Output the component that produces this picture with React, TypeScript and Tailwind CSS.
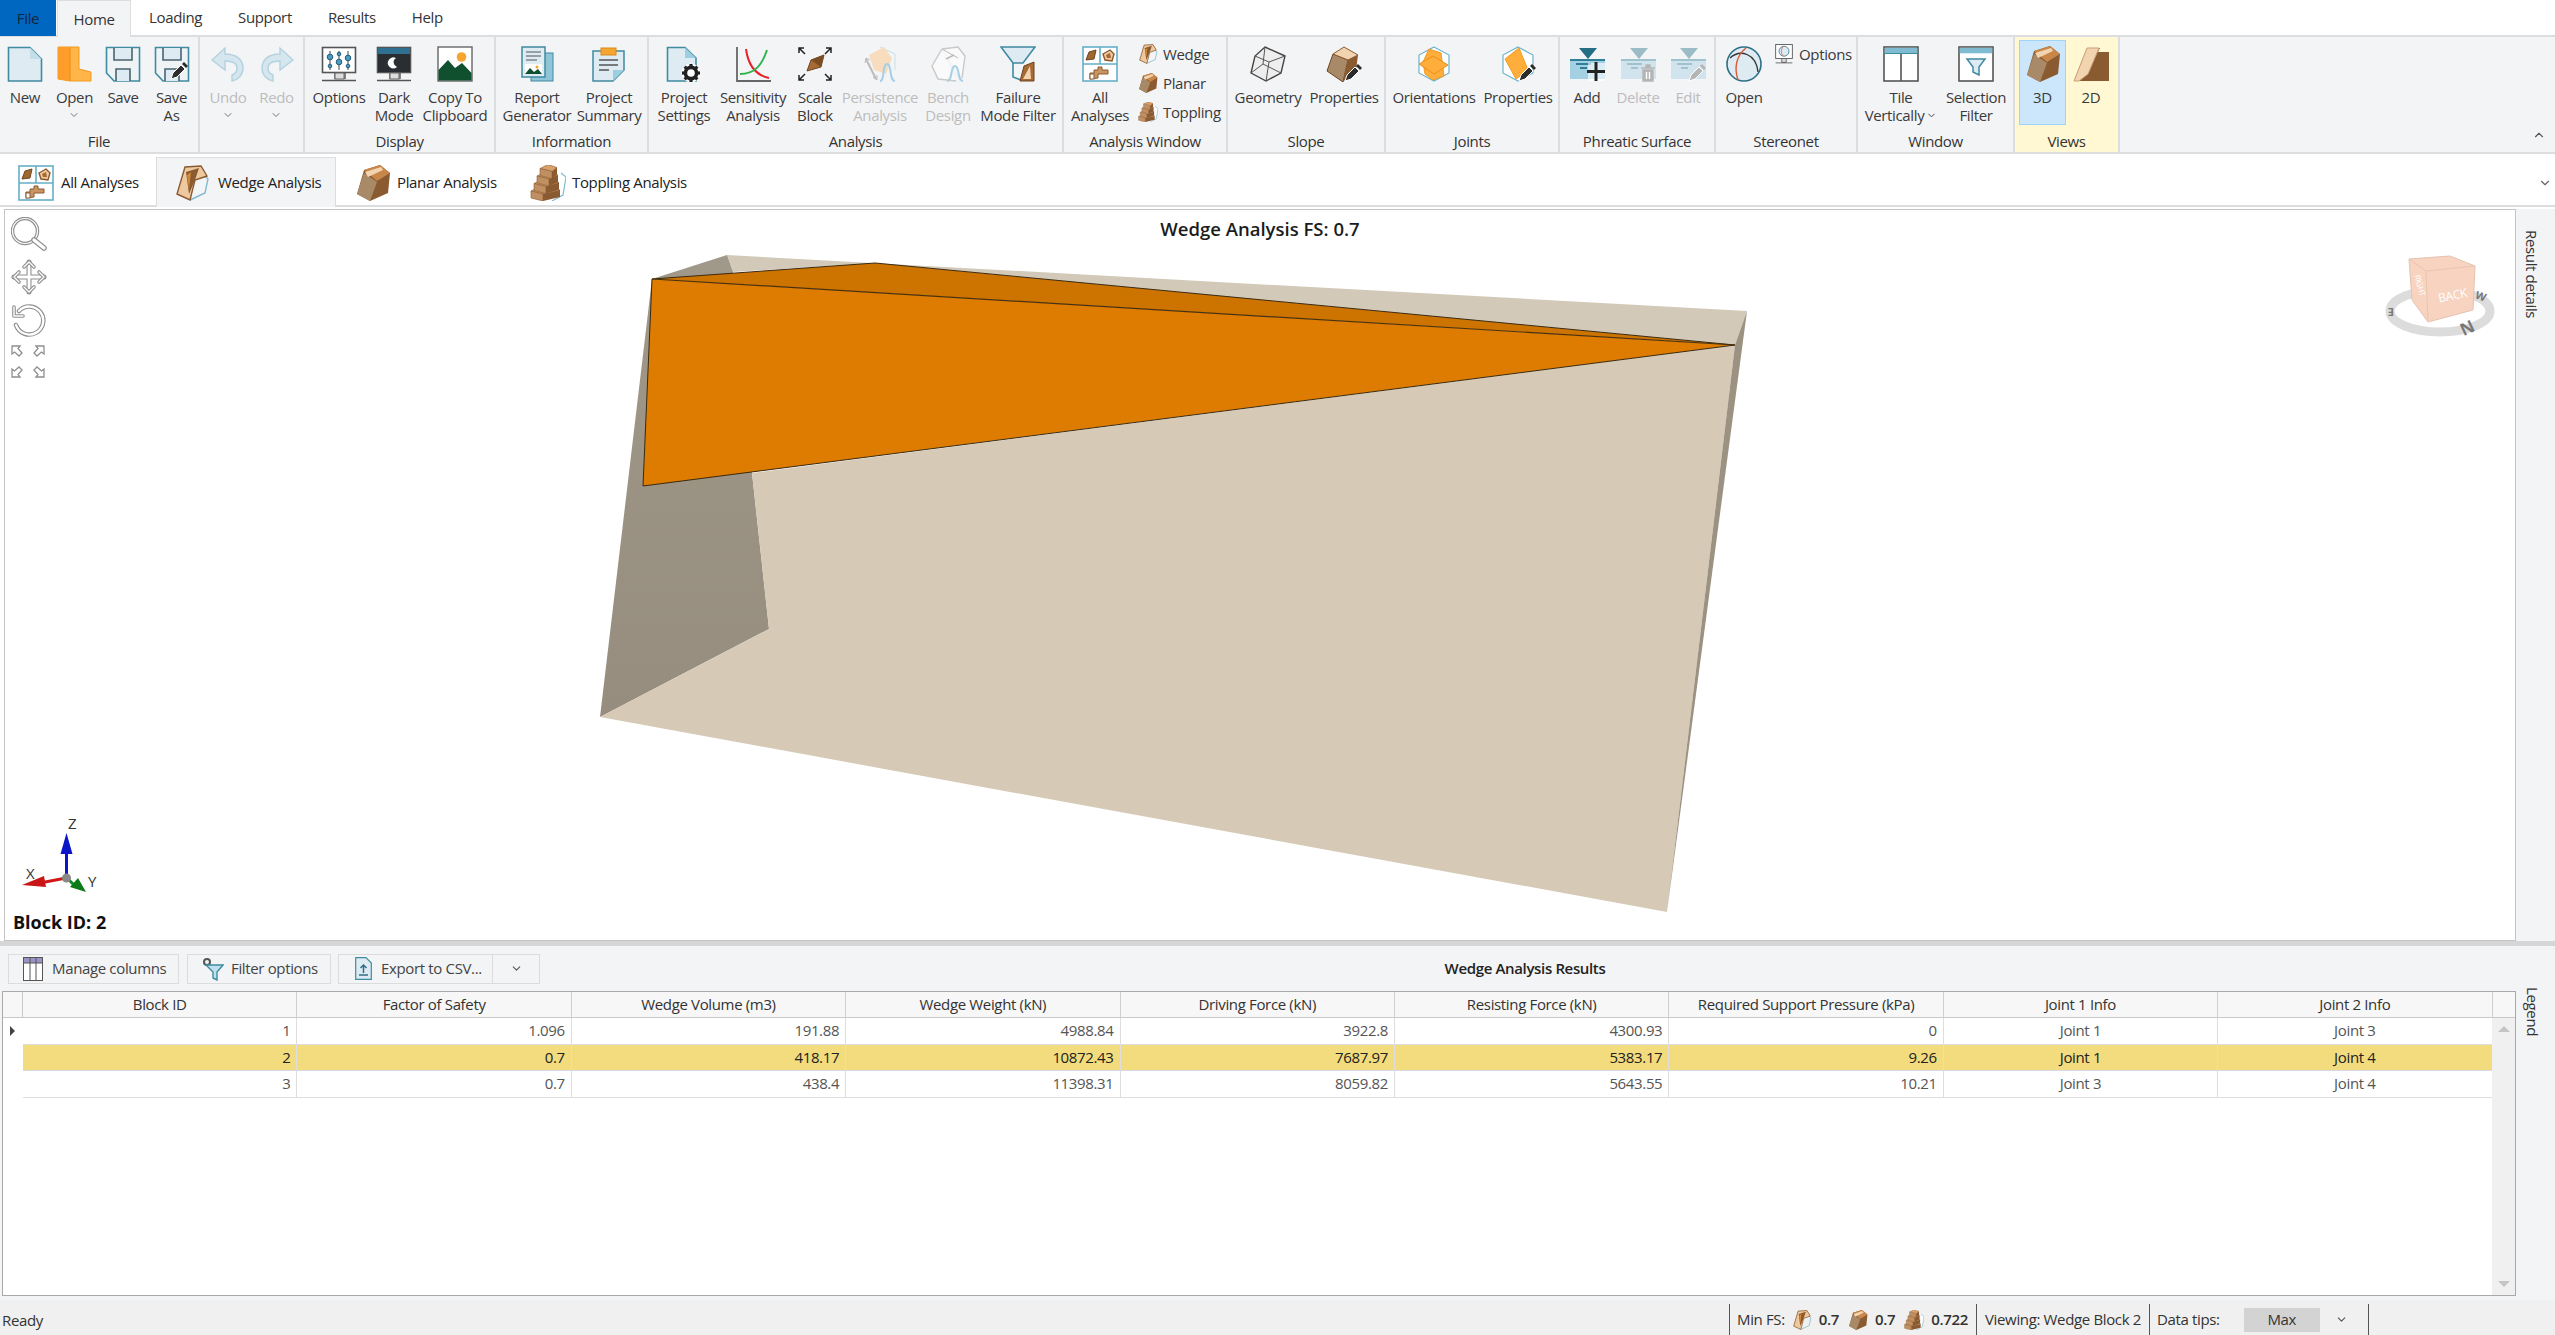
import type { ReactNode } from 'react'
import { ChevronDown, ChevronUp } from 'lucide-react'

// ribbon icon shell, everything is drawn on a 36 unit square
function Ico({ size = 36, children }: { size?: number; children: ReactNode }) {
  return (
    <svg width={size} height={size} viewBox="0 0 36 36" className="shrink-0 block">
      {children}
    </svg>
  )
}

const TEAL = '#3f8ba0'
const PALE = '#deebf3'
const BR = '#8a5a30'

const Pencil = ({ x = 0, y = 0, c = '#2c2c2c' }: { x?: number; y?: number; c?: string }) => (
  <g transform={`translate(${x} ${y})`}>
    <path d="M1 16 L3 10 L11 2 L15 6 L7 14 Z" fill={c} stroke="#fff" strokeWidth="1" />
    <path d="M12 1 L14 -1 L18 3 L16 5 Z" fill={c} />
  </g>
)

const Page = () => (
  <Ico>
    <path d="M1.5 1.5H23L34.5 13V35H1.5Z" fill={PALE} stroke={TEAL} strokeWidth="1.6" />
    <path d="M23 1.5V13H34.5Z" fill="#c3dde9" />
  </Ico>
)
const Folder = () => (
  <Ico>
    <path d="M1 1H22V23L34 26V35H13L1 33Z" fill="#ffb547" stroke="#f09a22" />
    <path d="M1 1H13V35L1 33Z" fill="#ff9d2a" />
    <path d="M13 2L13 35" stroke="#e88c14" />
  </Ico>
)
const Floppy = ({ pencil }: { pencil?: boolean }) => (
  <Ico>
    <path d="M1.5 1.5H34.5V35H9L1.5 27Z" fill="#eef3f6" stroke={TEAL} strokeWidth="1.6" />
    <path d="M9 2V14H27V2" fill={PALE} stroke="#4a6470" strokeWidth="1.6" />
    <path d="M11 35V23H25V35" fill={PALE} stroke="#4a6470" strokeWidth="1.6" />
    {pencil && <Pencil x={16} y={17} />}
  </Ico>
)
const Curl = ({ flip }: { flip?: boolean }) => (
  <Ico>
    <g transform={flip ? 'translate(36 0) scale(-1 1)' : undefined} fill="#d5e6ee" stroke="#b4d2df" strokeWidth="1.4">
      <path d="M2 14 L15 2 V8 C28 8 33 15 33 22 C33 29 28 34 22 35 V29 C25 28 27 25 27 22 C27 18 23 15 15 15 V24 Z" />
    </g>
  </Ico>
)
const Monitor = ({ children }: { children: ReactNode }) => (
  <Ico>
    <rect x="1.5" y="1.5" width="33" height="25" fill="#fff" stroke="#555" strokeWidth="1.6" />
    <path d="M14 27V33M24 27V33" stroke="#555" strokeWidth="1.4" fill="#ddd" />
    <rect x="14" y="27" width="9" height="6" fill="#ddd" stroke="#666" />
    <path d="M1 34.5H35" stroke="#555" strokeWidth="1.4" />
    {children}
  </Ico>
)
const Sliders = () => (
  <Monitor>
    {[9, 18, 27].map((x, i) => (
      <g key={x}>
        <path d={`M${x} 5V24`} stroke="#444" />
        <circle cx={x} cy={[11, 16, 12][i]} r="2.8" fill="#4c9cc0" stroke="#215a78" />
        <circle cx={x} cy={[20, 8, 20][i]} r="1.8" fill="#4c9cc0" stroke="#215a78" />
      </g>
    ))}
  </Monitor>
)
const DarkMode = () => (
  <Monitor>
    <rect x="2" y="2" width="32" height="24" fill="#2a2d31" />
    <rect x="2" y="2" width="32" height="6" fill="#2f6f8f" />
    <path d="M20 12 A5.5 5.5 0 1 0 21 21 A5 5 0 0 1 20 12Z" fill="#fff" />
  </Monitor>
)
const Picture = () => (
  <Ico>
    <rect x="1" y="1" width="34" height="34" fill="#fff" stroke="#666" strokeWidth="1.4" />
    <circle cx="24.5" cy="11" r="4.8" fill="#f5a630" />
    <path d="M1.5 34.5V24L11 14L18 22L25 17L34.5 27V34.5Z" fill="#10502f" />
  </Ico>
)
const Report = () => (
  <Ico>
    <rect x="12" y="7" width="22" height="28" fill="#8fc4d9" stroke={TEAL} />
    <rect x="3" y="1" width="23" height="30" fill={PALE} stroke={TEAL} strokeWidth="1.5" />
    <path d="M7 6H22M7 10H22M7 14H18" stroke="#555" strokeWidth="1.2" />
    <rect x="6" y="18" width="17" height="10" fill="#fff" />
    <path d="M6 28L11 22L15 26L19 23L23 28Z" fill="#10502f" />
    <circle cx="18" cy="21" r="1.5" fill="#f5a630" />
  </Ico>
)
const Summary = () => (
  <Ico>
    <path d="M2 5H33V24L22 35H2Z" fill={PALE} stroke={TEAL} strokeWidth="1.5" />
    <rect x="10" y="2" width="15" height="7" fill="#f5a630" stroke="#d98a18" />
    <path d="M8 14H27M8 19H27M8 24H18" stroke="#555" strokeWidth="1.3" />
    <path d="M33 24L22 35V24Z" fill="#9ccde0" />
  </Ico>
)
const Gear = ({ x, y }: { x: number; y: number }) => (
  <g transform={`translate(${x} ${y})`}>
    <circle r="9.5" fill="#fff" />
    <circle r="5.6" fill="none" stroke="#222" strokeWidth="3.6" />
    {[0, 45, 90, 135, 180, 225, 270, 315].map((a) => (
      <rect key={a} x="-1.6" y="-9" width="3.2" height="4" fill="#222" transform={`rotate(${a})`} />
    ))}
  </g>
)
const SettingsPage = () => (
  <Ico>
    <path d="M1.5 1.5H19L30 12V35H1.5Z" fill={PALE} stroke={TEAL} strokeWidth="1.6" />
    <path d="M19 1.5V12H30Z" fill="#9ccde0" />
    <Gear x={25} y={27} />
  </Ico>
)
const Sensitivity = () => (
  <Ico>
    <path d="M2 1V35H36" fill="none" stroke="#666" strokeWidth="1.8" />
    <path d="M11 3C13 18 20 29 34 32" fill="none" stroke="#e8232a" strokeWidth="2" />
    <path d="M5 28C20 28 27 19 32 4" fill="none" stroke="#2fb34a" strokeWidth="2" />
  </Ico>
)
const Scale = () => (
  <Ico>
    <path d="M10 25L14 14L27 9L24 21Z" fill="#a66a35" stroke="#6e4520" />
    <path d="M14 14L27 9L24 21Z" fill="#7c4c22" />
    <g stroke="#222" strokeWidth="1.5" fill="none">
      <path d="M2 2L8 8M2 7V2H7M34 2L28 8M29 2H34V7M2 34L8 28M2 29V34H7M34 34L28 28M34 29V34H29" />
    </g>
  </Ico>
)
const Persistence = () => (
  <Ico>
    <path d="M18 1L33 8V24" fill="none" stroke="#c8dfe8" />
    <path d="M7 9L22 1L30 12L24 28L12 24Z" fill="#f7ddbd" />
    <path d="M4 13L14 33" stroke="#bbb" strokeWidth="2" />
    <path d="M3 17L4 12L8 14M11 31L15 34L15 29" stroke="#bbb" fill="none" />
    <path d="M18 35C23 35 20 18 25 18C30 18 27 35 33 35" fill="none" stroke="#a9cfe6" strokeWidth="2" />
  </Ico>
)
const Bench = () => (
  <Ico>
    <path d="M12 3L28 1L35 10L32 32M12 3L2 20L8 33L26 35M28 12L12 3" fill="#fafafa" stroke="#c9c9c9" strokeWidth="1.4" />
    <path d="M16 13L24 9" stroke="#bbb" strokeWidth="1.4" />
    <path d="M17 35C23 35 20 20 25 20C30 20 27 35 33 35" fill="none" stroke="#a9cfe6" strokeWidth="2" />
  </Ico>
)
const Funnel = () => (
  <Ico>
    <path d="M1 1H35L23 17H13Z" fill={PALE} stroke={TEAL} strokeWidth="1.6" />
    <path d="M13 17V31L21 34" fill="none" stroke={TEAL} strokeWidth="1.6" />
    <path d="M20 35L24 20L34 16V35Z" fill="#a66a35" stroke="#6e4520" />
    <path d="M23 33L30 20L31 33Z" fill="#f3d4b0" />
  </Ico>
)
const AllGrid = () => (
  <Ico>
    <rect x="1" y="1" width="34" height="34" fill="#fff" stroke="#66aec9" strokeWidth="1.6" />
    <path d="M18 1V18M1 18H35" stroke="#66aec9" strokeWidth="1.6" />
    <path d="M4 14L7 6L14 4L12 13Z" fill="#a0682f" stroke="#6e4520" />
    <path d="M21 8L28 4L32 8L30 15L23 14Z" fill="#f1c79b" stroke={BR} strokeWidth="1.4" />
    <path d="M24 9L28 7L29 12L25 12Z" fill="#a66a35" />
    <path d="M8 33V27H12V24H16V21H20V24H26V28H16V32Z" fill="#c99562" stroke={BR} />
    <rect x="8" y="28" width="4" height="5" fill="#fff" stroke={BR} />
  </Ico>
)
const Wedge = ({ size = 36 }: { size?: number }) => (
  <Ico size={size}>
    <path d="M25 6L34 14L31 28L16 35" fill="none" stroke="#7fbcd2" strokeWidth="1.4" />
    <path d="M11 2L27 1L33 11L21 15L16 35L3 29Z" fill="#eec9a0" stroke={BR} strokeWidth="1.4" />
    <path d="M12 7L25 3L21 15L15 29Z" fill="#8b5a2e" />
    <path d="M13 10L17 7L15 24Z" fill="#d08a3c" />
  </Ico>
)
const Planar = ({ size = 36 }: { size?: number }) => (
  <Ico size={size}>
    <path d="M9 5L25 0L35 8L33 28L15 36L2 29Z" fill="#8a5a30" />
    <path d="M2 29L9 8L22 17L15 36Z" fill="#a98a68" />
    <path d="M9 5L25 0L35 8L22 16Z" fill="#c8874a" />
    <path d="M10 7L26 2L28 5L13 12Z" fill="#f3d4b0" />
  </Ico>
)
const Topple = ({ size = 36 }: { size?: number }) => (
  <Ico size={size}>
    <path d="M31 8L36 12L33 30L22 36" fill="#fff" stroke="#7fbcd2" strokeWidth="1.2" />
    {[0, 1, 2, 3].map((i) => {
      const x0 = 1 + i * 3
      const x1 = x0 + 12
      const x2 = 30 - i
      const y = 24 - i * 7.5
      return (
        <g key={i}>
          <path d={`M${x0} ${y + 2}L${x0 + 8} ${y - 2}L${x2} ${y + 1}L${x1} ${y + 5}Z`} fill="#d9a06a" stroke={BR} strokeWidth="0.6" />
          <path d={`M${x0} ${y + 2}L${x1} ${y + 5}V${y + 12}L${x0} ${y + 9}Z`} fill="#c08f62" stroke={BR} strokeWidth="0.6" />
          <path d={`M${x1} ${y + 5}L${x2} ${y + 1}V${y + 8}L${x1} ${y + 12}Z`} fill="#8a5a30" />
        </g>
      )
    })}
  </Ico>
)
const Geometry = () => (
  <Ico>
    <path d="M15 1L35 10L31 27L16 35L1 27L5 10Z" fill="#eee" stroke="#444" strokeWidth="1.4" />
    <path d="M5 10L19 16L35 10M19 16L16 35M15 1L13 18L1 27M13 18L31 27" fill="none" stroke="#555" strokeWidth="1" />
  </Ico>
)
const SlopeProps = () => (
  <Ico>
    <path d="M1 25L7 8L22 14L17 36Z" fill="#a98a68" stroke="#6e4520" />
    <path d="M7 8L18 1L32 9L22 14Z" fill="#f3d4b0" stroke={BR} />
    <path d="M22 14L32 9L30 24L17 36Z" fill="#8a5a30" />
    <Pencil x={18} y={19} />
  </Ico>
)
const Hex = () => <path d="M18 1L33 9V27L18 35L3 27V9Z" fill="#fff" stroke="#6db4cc" strokeWidth="1.2" />
const Orient = () => (
  <Ico>
    <Hex />
    <path d="M13 3L25 7L28 30L17 34L9 28L7 16Z" fill="#ffae3c" stroke="#f09a22" />
    <path d="M3 18L17 10L32 19L18 28Z" fill="#ffae3c" stroke="#e98f18" />
  </Ico>
)
const JointProps = () => (
  <Ico>
    <Hex />
    <path d="M5 13L19 2L28 24L16 33Z" fill="#ffae3c" stroke="#f09a22" />
    <Pencil x={18} y={19} />
  </Ico>
)
const Water = ({ faded }: { faded?: boolean }) => (
  <g opacity={faded ? 0.42 : 1}>
    <path d="M10 2H28L19 13Z" fill="#236d85" />
    <rect x="1" y="13" width="35" height="20" fill="#a4d0e3" />
    <rect x="1" y="13" width="35" height="2" fill="#2f7f98" />
    <path d="M7 18H22M11 22H18" stroke="#2f7f98" strokeWidth="2" />
  </g>
)
const PhreaticAdd = () => (
  <Ico>
    <Water />
    <rect x="19" y="17" width="17" height="18" fill="#fff" opacity="0.6" />
    <path d="M27 16V35M18 25.5H36" stroke="#222" strokeWidth="3" />
  </Ico>
)
const PhreaticDelete = () => (
  <Ico>
    <Water faded />
    <path d="M21 22H35M26 22V19H30V22M23 24H33V35H23Z" fill="#b5b5b5" stroke="#b5b5b5" strokeWidth="1.4" />
    <path d="M26.5 26V33M29.5 26V33" stroke="#fff" strokeWidth="1.4" />
  </Ico>
)
const PhreaticEdit = () => (
  <Ico>
    <Water faded />
    <Pencil x={18} y={19} c="#b5b5b5" />
  </Ico>
)
const Stereo = () => (
  <Ico>
    <circle cx="18" cy="18" r="17" fill={PALE} stroke="#2e6f86" strokeWidth="1.6" />
    <path d="M4 12C14 3 30 7 32 26" fill="none" stroke="#333" strokeWidth="1.3" />
    <path d="M20 2C10 10 8 22 12 34" fill="none" stroke="#e0562f" strokeWidth="1.4" />
  </Ico>
)
const SmallOptions = () => (
  <Ico size={20}>
    <rect x="3" y="1" width="30" height="25" fill="#fff" stroke="#555" strokeWidth="1.6" />
    <circle cx="18" cy="13" r="9" fill={PALE} stroke="#2e6f86" strokeWidth="1.4" />
    <path d="M16 5C12 11 13 17 16 21" fill="none" stroke="#e0562f" strokeWidth="1.4" />
    <path d="M14 27V33H22V27M3 34H33" fill="#ddd" stroke="#555" strokeWidth="1.5" />
  </Ico>
)
const Tile = () => (
  <Ico>
    <rect x="1" y="1" width="34" height="34" fill="#fff" stroke="#555" strokeWidth="1.6" />
    <rect x="1.8" y="1.8" width="32.4" height="5.5" fill="#7fbcd2" />
    <path d="M1 7.5H35" stroke="#3f8ba0" />
    <path d="M18 8V35" stroke="#555" strokeWidth="1.6" />
  </Ico>
)
const SelFilter = () => (
  <Ico>
    <rect x="1" y="1" width="34" height="34" fill="#fff" stroke="#555" strokeWidth="1.6" />
    <rect x="1.8" y="1.8" width="32.4" height="5.5" fill="#7fbcd2" />
    <path d="M9 13H27L21 21V29L15 26V21Z" fill={PALE} stroke={TEAL} strokeWidth="1.5" />
  </Ico>
)
const View2D = () => (
  <Ico>
    <path d="M1 35L14 2H27L25 6H36V35Z" fill="#8a5a30" />
    <path d="M1 35L14 2H26L15 28L6 35Z" fill="#f3d4b0" stroke="#c9a27a" />
  </Ico>
)

interface Tool {
  label: string[]
  w: number
  icon: ReactNode
  off?: boolean
  caret?: boolean
  on?: boolean
}

interface SmallTool {
  label: string
  icon: ReactNode
}

interface Group {
  name: string
  w: number
  pl: number
  tools: Tool[]
  small?: SmallTool[]
  view?: boolean
}

const GROUPS: Group[] = [
  {
    name: 'File',
    w: 200,
    pl: 0,
    tools: [
      { label: ['New'], w: 50, icon: <Page /> },
      { label: ['Open'], w: 49, icon: <Folder />, caret: true },
      { label: ['Save'], w: 48, icon: <Floppy /> },
      { label: ['Save', 'As'], w: 49, icon: <Floppy pencil /> },
    ],
  },
  {
    name: '',
    w: 105,
    pl: 4,
    tools: [
      { label: ['Undo'], w: 48, icon: <Curl />, off: true, caret: true },
      { label: ['Redo'], w: 49, icon: <Curl flip />, off: true, caret: true },
    ],
  },
  {
    name: 'Display',
    w: 191,
    pl: 6,
    tools: [
      { label: ['Options'], w: 56, icon: <Sliders /> },
      { label: ['Dark', 'Mode'], w: 54, icon: <DarkMode /> },
      { label: ['Copy To', 'Clipboard'], w: 68, icon: <Picture /> },
    ],
  },
  {
    name: 'Information',
    w: 153,
    pl: 6,
    tools: [
      { label: ['Report', 'Generator'], w: 70, icon: <Report /> },
      { label: ['Project', 'Summary'], w: 74, icon: <Summary /> },
    ],
  },
  {
    name: 'Analysis',
    w: 415,
    pl: 3,
    tools: [
      { label: ['Project', 'Settings'], w: 64, icon: <SettingsPage /> },
      { label: ['Sensitivity', 'Analysis'], w: 74, icon: <Sensitivity /> },
      { label: ['Scale', 'Block'], w: 50, icon: <Scale /> },
      { label: ['Persistence', 'Analysis'], w: 80, icon: <Persistence />, off: true },
      { label: ['Bench', 'Design'], w: 56, icon: <Bench />, off: true },
      { label: ['Failure', 'Mode Filter'], w: 84, icon: <Funnel /> },
    ],
  },
  {
    name: 'Analysis Window',
    w: 164,
    pl: 4,
    tools: [{ label: ['All', 'Analyses'], w: 64, icon: <AllGrid /> }],
    small: [
      { label: 'Wedge', icon: <Wedge size={20} /> },
      { label: 'Planar', icon: <Planar size={20} /> },
      { label: 'Toppling', icon: <Topple size={20} /> },
    ],
  },
  {
    name: 'Slope',
    w: 158,
    pl: 6,
    tools: [
      { label: ['Geometry'], w: 68, icon: <Geometry /> },
      { label: ['Properties'], w: 84, icon: <SlopeProps /> },
    ],
  },
  {
    name: 'Joints',
    w: 174,
    pl: 4,
    tools: [
      { label: ['Orientations'], w: 88, icon: <Orient /> },
      { label: ['Properties'], w: 80, icon: <JointProps /> },
    ],
  },
  {
    name: 'Phreatic Surface',
    w: 156,
    pl: 4,
    tools: [
      { label: ['Add'], w: 46, icon: <PhreaticAdd /> },
      { label: ['Delete'], w: 56, icon: <PhreaticDelete />, off: true },
      { label: ['Edit'], w: 44, icon: <PhreaticEdit />, off: true },
    ],
  },
  {
    name: 'Stereonet',
    w: 142,
    pl: 4,
    tools: [{ label: ['Open'], w: 48, icon: <Stereo /> }],
    small: [{ label: 'Options', icon: <SmallOptions /> }],
  },
  {
    name: 'Window',
    w: 157,
    pl: 6,
    tools: [
      { label: ['Tile', 'Vertically'], w: 74, icon: <Tile />, caret: true },
      { label: ['Selection', 'Filter'], w: 76, icon: <SelFilter /> },
    ],
  },
  {
    name: 'Views',
    w: 105,
    pl: 4,
    view: true,
    tools: [
      { label: ['3D'], w: 47, icon: <Planar />, on: true },
      { label: ['2D'], w: 50, icon: <View2D /> },
    ],
  },
]

function RibbonTool({ tool }: { tool: Tool }) {
  const caretInline = tool.caret && tool.label.length > 1
  return (
    <div
      style={{ width: tool.w }}
      className={`flex h-[85px] shrink-0 flex-col items-center border pt-[5px] leading-[18px] ${
        tool.on ? 'border-[#9fd3f7] bg-[#cce6fb]' : 'border-transparent'
      } ${tool.off ? 'text-[#bdbdbd]' : 'text-[#3a3a3a]'}`}
    >
      {tool.icon}
      <div className="mt-[6px] whitespace-nowrap text-center">
        {tool.label.map((l, i) => (
          <div key={l} className="flex items-center justify-center">
            {l}
            {caretInline && i === 1 && <ChevronDown size={11} className="ml-[2px]" />}
          </div>
        ))}
        {tool.caret && !caretInline && <ChevronDown size={12} className="mx-auto mt-[3px] text-[#777]" />}
      </div>
    </div>
  )
}

function RibbonGroup({ group }: { group: Group }) {
  return (
    <div
      style={{ width: group.w, paddingLeft: group.pl }}
      className={`flex h-full shrink-0 flex-col border-r-2 border-[#dcdddf] ${group.view ? 'bg-[#fff8d2]' : ''}`}
    >
      <div className="flex h-[94px] items-start pt-[3px]">
        {group.tools.map((t) => (
          <RibbonTool key={t.label.join()} tool={t} />
        ))}
        {group.small && (
          <div className="ml-[6px] flex flex-col gap-[9px] pt-[4px] text-[#3a3a3a]">
            {group.small.map((s) => (
              <div key={s.label} className="flex h-[20px] items-center gap-[5px] leading-none">
                {s.icon}
                {s.label}
              </div>
            ))}
          </div>
        )}
      </div>
      <div className="text-center leading-[20px] text-[#333]" style={{ marginLeft: -group.pl }}>
        {group.name}
      </div>
    </div>
  )
}

// model view in page coordinates
function Scene() {
  return (
    <svg viewBox="5 210 2510 730" className="absolute inset-0 h-full w-full">
      <defs>
        <linearGradient id="side" x1="0" y1="0" x2="0" y2="1">
          <stop offset="0" stopColor="#a09888" />
          <stop offset="1" stopColor="#968d7e" />
        </linearGradient>
      </defs>
      <polygon points="727,255 1747,311 1735,345 875,263 733,272" fill="#d2c9b9" />
      <polygon points="727,255 652,279 600,717 769,629 752,473 733,272" fill="url(#side)" />
      <polygon points="600,717 769,629 752,473 1735,345 1667,912" fill="#d6cab7" />
      <polygon points="1747,311 1735,345 1667,912" fill="#9c9282" />
      <polygon points="652,279 875,263 1735,345" fill="#cc7300" />
      <polygon points="652,279 1735,345 643,486" fill="#dd7c00" />
      <path d="M652 279L875 263L1735 345L643 486Z" fill="none" stroke="#3a2a10" strokeWidth="1" />
      <path d="M652 279L1735 345" stroke="#4a3210" strokeWidth="1.2" />
      {/* view cube */}
      <ellipse cx="2440" cy="311" rx="50" ry="21" fill="none" stroke="#dcdcdc" strokeWidth="9" />
      <g fill="#777" fontFamily="Open Sans, sans-serif" fontWeight="700">
        <text x="2384" y="318" fontSize="11" transform="rotate(180 2389 313)">E</text>
        <text x="2476" y="300" fontSize="11" transform="rotate(20 2481 295)">W</text>
        <text x="2460" y="334" fontSize="17" transform="rotate(-25 2467 327)">N</text>
      </g>
      <polygon points="2409,259 2450,256 2475,266 2473,310 2428,322 2412,300" fill="#f8d3bf" stroke="#e3c3b1" />
      <path d="M2409 259L2426 271L2475 266M2426 271L2428 322" fill="none" stroke="#e9c4b0" />
      <path d="M2450 256L2450 300M2412 300L2450 300L2473 310M2450 300L2428 322" fill="none" stroke="#f1d4c5" />
      <text x="2438" y="300" fill="#fff" fontSize="12" fontFamily="Open Sans, sans-serif" transform="rotate(-12 2451 295)">BACK</text>
      <text x="2408" y="286" fill="#fff" fontSize="8" fontFamily="Open Sans, sans-serif" transform="rotate(75 2418 285)">RIGHT</text>
      {/* axes */}
      <path d="M66.5 878V853" stroke="#0a16c8" strokeWidth="3" />
      <polygon points="66.5,833 72.5,854 60.5,854" fill="#0a16c8" />
      <path d="M66 878L40 883" stroke="#d01818" strokeWidth="3" />
      <polygon points="22,885 44,876 46,887" fill="#c81616" />
      <path d="M67 878L74 885" stroke="#128a20" strokeWidth="3" />
      <polygon points="86,892 70,887 78,878" fill="#0c7a18" />
      <circle cx="66.5" cy="878" r="4.5" fill="#888" />
      <g fill="#333" fontSize="15" fontFamily="Open Sans, sans-serif">
        <text x="68" y="829">Z</text>
        <text x="26" y="879">X</text>
        <text x="88" y="887">Y</text>
      </g>
    </svg>
  )
}

function NavTools() {
  const dbl = (d: string, w = 5) => (
    <>
      <path d={d} fill="none" stroke="#8f8f8f" strokeWidth={w} strokeLinecap="round" strokeLinejoin="round" />
      <path d={d} fill="none" stroke="#fff" strokeWidth={w - 2.2} strokeLinecap="round" strokeLinejoin="round" />
    </>
  )
  const Tiny = ({ rot }: { rot: number }) => (
    <svg width="12" height="12" viewBox="0 0 12 12" style={{ transform: `rotate(${rot}deg)` }}>
      <path d="M1 1H9L7 3.5L11 8L8 11L3.5 7L1 9Z" fill="#fff" stroke="#8f8f8f" strokeWidth="1.3" />
    </svg>
  )
  return (
    <div className="absolute left-[6px] top-[7px] flex w-[36px] flex-col gap-[8px]">
      <svg width="36" height="34" viewBox="0 0 36 34">
        <circle cx="14" cy="14" r="12.5" fill="none" stroke="#8f8f8f" strokeWidth="3.5" />
        <circle cx="14" cy="14" r="12.5" fill="none" stroke="#fff" strokeWidth="1.2" />
        {dbl('M23 23L33 31', 5.5)}
      </svg>
      <svg width="36" height="36" viewBox="0 0 36 36">
        {dbl('M18 3V33M3 18H33', 5)}
        {dbl('M13 8L18 3L23 8M13 28L18 33L23 28M8 13L3 18L8 23M28 13L33 18L28 23', 3.6)}
      </svg>
      <svg width="36" height="34" viewBox="0 0 36 34">
        {dbl('M8 8A14 14 0 1 1 5 22', 4.5)}
        {dbl('M3 4V13H12', 3.6)}
      </svg>
      <div className="grid w-[34px] grid-cols-2 gap-x-[10px] gap-y-[9px]">
        <Tiny rot={0} />
        <Tiny rot={90} />
        <Tiny rot={270} />
        <Tiny rot={180} />
      </div>
    </div>
  )
}

const HEADERS = [
  'Block ID',
  'Factor of Safety',
  'Wedge Volume (m3)',
  'Wedge Weight (kN)',
  'Driving Force (kN)',
  'Resisting Force (kN)',
  'Required Support Pressure (kPa)',
  'Joint 1 Info',
  'Joint 2 Info',
]

const ROWS = [
  ['1', '1.096', '191.88', '4988.84', '3922.8', '4300.93', '0', 'Joint 1', 'Joint 3'],
  ['2', '0.7', '418.17', '10872.43', '7687.97', '5383.17', '9.26', 'Joint 1', 'Joint 4'],
  ['3', '0.7', '438.4', '11398.31', '8059.82', '5643.55', '10.21', 'Joint 3', 'Joint 4'],
]

const GRID = 'grid grid-cols-[20px_repeat(9,274.4px)]'

function ResultsTable() {
  return (
    <div className="relative ml-[2px] flex h-[305px] flex-col border border-[#a9a9a9] bg-white">
      <div className={`${GRID} h-[26px] bg-[#f7f7f7] text-[#333] shadow-[inset_0_-1px_0_#c8c8c8]`}>
        <div className="border-r border-[#c8c8c8]" />
        {HEADERS.map((h) => (
          <div key={h} className="flex items-center justify-center border-r border-[#cfcfcf] pb-[2px]">
            {h}
          </div>
        ))}
      </div>
      {ROWS.map((row, i) => (
        <div key={row[0]} className={`${GRID} h-[26.5px] ${i === 1 ? 'text-[#222]' : 'text-[#555]'}`}>
          <div className="flex items-center justify-center bg-white">
            {i === 0 && <div className="ml-[-2px] h-0 w-0 border-y-[5px] border-l-[5px] border-y-transparent border-l-[#444]" />}
          </div>
          {row.map((c, j) => (
            <div
              key={j}
              className={`flex items-center border-b border-r border-[#dedede] ${j > 6 ? 'justify-center' : 'justify-end pr-[6px]'} ${
                i === 1 ? 'border-b-[#d5d9e2] bg-[#f3dc7d]' : ''
              }`}
            >
              {c}
            </div>
          ))}
        </div>
      ))}
      <div className="absolute bottom-0 right-0 top-[26px] flex w-[23px] flex-col items-center justify-between bg-[#f0f0f0] py-[8px]">
        <div className="h-0 w-0 border-x-[6px] border-b-[6px] border-x-transparent border-b-[#c4c4c4]" />
        <div className="h-0 w-0 border-x-[6px] border-t-[6px] border-x-transparent border-t-[#c4c4c4]" />
      </div>
    </div>
  )
}

function ToolbarButton({ icon, label, w }: { icon: ReactNode; label: string; w: number }) {
  return (
    <div style={{ width: w }} className="flex h-[30px] items-center gap-[9px] border border-[#dcdcdc] bg-[#f3f4f6] pl-[14px] text-[#444]">
      {icon}
      {label}
    </div>
  )
}

export default function App() {
  return (
    <div
      className="flex h-[1335px] w-[2555px] flex-col overflow-hidden bg-white text-[15px] leading-none tracking-[-0.35px] text-[#333]"
      style={{ fontFamily: '"Open Sans", "Noto Sans", sans-serif' }}
    >
      {/* menu tabs */}
      <div className="flex h-[37px] shrink-0 items-stretch border-b-2 border-[#dcdddf]">
        <div className="flex h-[36px] w-[56px] items-center justify-center bg-[#0067c0] text-[#10263c]">File</div>
        <div className="z-10 mb-[-2px] ml-[1px] flex w-[74px] items-center justify-center border-x border-t border-[#dcdddf] bg-[#f3f4f6]">Home</div>
        {['Loading', 'Support', 'Results', 'Help'].map((t) => (
          <div key={t} className="flex items-center px-[18px]">
            {t}
          </div>
        ))}
      </div>

      {/* ribbon */}
      <div className="relative flex h-[117px] shrink-0 border-b-2 border-[#dcdddf] bg-[#f3f4f6]">
        {GROUPS.map((g) => (
          <RibbonGroup key={g.name || 'history'} group={g} />
        ))}
        <ChevronUp size={14} className="absolute right-[9px] top-[91px] text-[#555]" />
      </div>

      {/* analysis tabs */}
      <div className="relative flex h-[53px] shrink-0 items-end border-b-2 border-[#dcdddf] pl-[18px] text-[#222]">
        <div className="flex h-full w-[138px] items-center gap-[7px] pt-[6px]">
          <AllGrid />
          All Analyses
        </div>
        <div className="z-10 mb-[-2px] flex h-[50px] w-[180px] items-center gap-[8px] border-x border-t border-[#dcdddf] bg-[#f3f4f6] pl-[17px]">
          <Wedge />
          Wedge Analysis
        </div>
        <div className="flex h-full w-[175px] items-center gap-[6px] pl-[19px] pt-[6px]">
          <Planar />
          Planar Analysis
        </div>
        <div className="flex h-full items-center gap-[6px] pl-[19px] pt-[6px]">
          <Topple />
          Toppling Analysis
        </div>
        <ChevronDown size={14} className="absolute right-[3px] top-[22px] text-[#666]" />
      </div>

      {/* 3d view and side strip */}
      <div className="flex h-[734px] shrink-0 pt-[2px]">
        <div className="relative ml-[4px] w-[2512px] shrink-0 border border-[#c4c4c4] bg-white">
          <Scene />
          <div className="absolute left-0 right-0 top-[10px] text-center text-[18.5px] font-semibold tracking-normal text-[#1c1c1c]">
            Wedge Analysis FS: 0.7
          </div>
          <NavTools />
          <div className="absolute bottom-[9px] left-[8px] text-[18px] font-bold tracking-normal text-[#111]">Block ID: 2</div>
        </div>
        <div className="flex-1 bg-[#f3f4f6] pr-[16px] pt-[21px] [writing-mode:vertical-rl]">Result details</div>
      </div>

      {/* results panel */}
      <div className="flex h-[359px] shrink-0 border-t-[5px] border-[#d6d6d6]">
        <div className="w-[2516px] shrink-0 bg-[#f3f4f6]">
          <div className="relative flex h-[45px] items-center gap-[8px] pl-[8px]">
            <ToolbarButton
              w={171}
              label="Manage columns"
              icon={
                <svg width="20" height="24" viewBox="0 0 20 24">
                  <rect x="0.5" y="0.5" width="19" height="23" fill="#fff" stroke="#555" />
                  <rect x="1" y="1" width="18" height="5" fill="#9b93c8" />
                  <path d="M7 1V23M13 1V23M1 6H19" stroke="#555" />
                </svg>
              }
            />
            <div className="flex h-[30px] w-[144px] items-center gap-[7px] border border-[#dcdcdc] bg-[#f3f4f6] pl-[14px] text-[#444]">
              <svg width="22" height="24" viewBox="0 0 22 24">
                <circle cx="5" cy="5" r="3" fill="none" stroke="#555" strokeWidth="2" />
                <path d="M4 8H21L15 15V23L11 21V15Z" fill="#bfe0ee" stroke="#3f8ba0" strokeWidth="1.4" />
              </svg>
              Filter options
            </div>
            <div className="ml-[-1px] flex h-[30px] w-[202px] items-center border border-[#dcdcdc] text-[#444]">
              <div className="flex h-full flex-1 items-center gap-[9px] border-r border-[#dcdcdc] pl-[16px]">
                <svg width="17" height="23" viewBox="0 0 17 23">
                  <path d="M0.7 0.7H11L16.3 6V22.3H0.7Z" fill={PALE} stroke={TEAL} strokeWidth="1.2" />
                  <path d="M8.5 8V16M5.5 11L8.5 8L11.5 11M4 18H13" fill="none" stroke="#2e6f86" strokeWidth="1.5" />
                </svg>
                Export to CSV...
              </div>
              <div className="flex w-[46px] items-center justify-center">
                <ChevronDown size={13} className="text-[#555]" />
              </div>
            </div>
            <div className="absolute left-0 right-0 top-[15px] text-center font-semibold text-[#222]" style={{ paddingLeft: 534 }}>
              Wedge Analysis Results
            </div>
          </div>
          <ResultsTable />
        </div>
        <div className="flex-1 bg-[#f3f4f6] pr-[15px] pt-[41px] [writing-mode:vertical-rl]">Legend</div>
      </div>

      {/* status bar */}
      <div className="flex h-[35px] flex-1 items-end justify-between bg-[#f0f0f0] pl-[2px] text-[#333]">
        <div className="self-center pt-[6px]">Ready</div>
        <div className="mr-[186px] flex h-[31px] items-center">
          <div className="flex h-full w-[248px] items-center gap-[7px] border-x border-[#555] pl-[7px]">
            Min FS:
            <Wedge size={20} />
            <b className="mr-[2px] font-semibold">0.7</b>
            <Planar size={20} />
            <b className="mr-[2px] font-semibold">0.7</b>
            <Topple size={20} />
            <b className="font-semibold">0.722</b>
          </div>
          <div className="flex h-full w-[173px] items-center justify-center border-r border-[#555]">Viewing: Wedge Block 2</div>
          <div className="flex h-full w-[219px] items-center border-r border-[#555] pl-[7px]">
            Data tips:
            <div className="ml-[24px] flex h-[24px] w-[76px] items-center justify-center bg-[#d3d3d3]">Max</div>
            <ChevronDown size={13} className="ml-[15px] text-[#555]" />
          </div>
        </div>
      </div>
    </div>
  )
}
